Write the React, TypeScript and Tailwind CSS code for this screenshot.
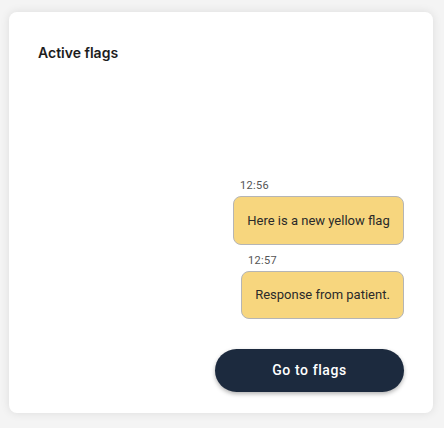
import React from "react";

export default function App() {
  return (
    <div className="w-[444px] h-[428px] bg-[#f4f4f4] pt-[12px] pl-[9px]" style={{ fontFamily: "Roboto, 'Liberation Sans', sans-serif" }}>
      <div className="w-[424px] h-[401px] bg-white rounded-[8px] shadow-[0_0_10px_rgba(0,0,0,0.10)] flex flex-col pt-[31px] pl-[29px] pr-[29px] pb-[21px]">
        <h2 className="text-[14px] leading-[20px] font-semibold text-[#1d1d1d]" style={{ fontFamily: "Inter, 'Liberation Sans', sans-serif" }}>
          Active flags
        </h2>
        <div className="mt-auto flex flex-col items-end">
          <div className="flex flex-col">
            <span className="text-[11px] leading-[12px] text-[#555] pl-[7px] mb-[4px] tracking-[0.3px]">12:56</span>
            <div className="w-[171px] h-[49px] flex items-center justify-center rounded-[8px] bg-[#f7d67e] border border-[#b5b5b5] text-[13px] text-[#2a2a2a]">
              Here is a new yellow flag
            </div>
          </div>
          <div className="flex flex-col mt-[10px]">
            <span className="text-[11px] leading-[12px] text-[#555] pl-[7px] mb-[4px] tracking-[0.3px]">12:57</span>
            <div className="w-[163px] h-[48px] flex items-center justify-center rounded-[8px] bg-[#f7d67e] border border-[#b5b5b5] text-[13px] text-[#2a2a2a]">
              Response from patient.
            </div>
          </div>
          <button className="mt-[30px] w-[189px] h-[43px] rounded-full bg-[#1c2a3e] text-white text-[14px] font-medium tracking-[0.6px] shadow-[0_2px_4px_rgba(0,0,0,0.3)]">
            Go to flags
          </button>
        </div>
      </div>
    </div>
  );
}
